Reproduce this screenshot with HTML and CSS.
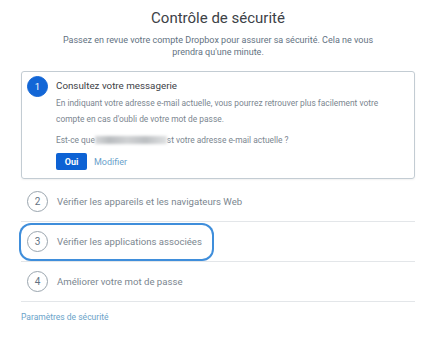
FILE: index.html
```html
<!DOCTYPE html>
<html lang="fr">
<head>
<meta charset="utf-8">
<title>Contrôle de sécurité</title>
<link rel="stylesheet" href="styles.css">
</head>
<body>
<main class="page">
  <header class="intro">
    <h1 class="title">Contrôle de sécurité</h1>
    <p class="subtitle">Passez en revue votre compte Dropbox pour assurer sa sécurité. Cela ne vous prendra qu'une minute.</p>
  </header>

  <section class="card">
    <span class="step step-active">1</span>
    <div class="card-body">
      <h2 class="card-title">Consultez votre messagerie</h2>
      <p class="card-text">En indiquant votre adresse e-mail actuelle, vous pourrez retrouver plus facilement votre compte en cas d'oubli de votre mot de passe.</p>
      <p class="card-question">Est-ce que<span class="blur"></span>st votre adresse e-mail actuelle ?</p>
      <div class="actions">
        <button class="btn-primary" type="button">Oui</button>
        <a class="link" href="#">Modifier</a>
      </div>
    </div>
  </section>

  <ul class="steps">
    <li class="row"><a class="row-link" href="#"><span class="step">2</span><span class="row-text">Vérifier les appareils et les navigateurs Web</span></a></li>
    <li class="row"><a class="row-link focused" href="#"><span class="step">3</span><span class="row-text">Vérifier les applications associées</span></a></li>
    <li class="row"><a class="row-link" href="#"><span class="step">4</span><span class="row-text">Améliorer votre mot de passe</span></a></li>
  </ul>

  <a class="footer-link" href="#">Paramètres de sécurité</a>
</main>
</body>
</html>
```

FILE: styles.css
```css
* { box-sizing: border-box; }
html, body { margin: 0; padding: 0; background: #ffffff; }
body { font-family: Roboto, "Liberation Sans", sans-serif; color: #637282; }

.page {
  width: 448px;
  padding: 0 33px 0 21px;
  display: flex;
  flex-direction: column;
}

.intro { text-align: center; padding-top: 8px; }
.title {
  margin: 0;
  font-size: 15px;
  line-height: 20px;
  font-weight: 400;
  color: #3d4247;
}
.subtitle {
  margin: 6px 30px 0;
  font-size: 9px;
  line-height: 12px;
  color: #637282;
}

.card {
  margin-top: 13px;
  border: 1px solid #c3ccd3;
  border-radius: 3px;
  box-shadow: 0 1px 2px rgba(0,0,0,0.06);
  padding: 4px 8px 8px 5px;
  display: flex;
  gap: 8px;
  align-items: flex-start;
}

.step {
  flex: none;
  width: 21px;
  height: 21px;
  border-radius: 50%;
  border: 1px solid #9aa5ae;
  display: flex;
  align-items: center;
  justify-content: center;
  font-size: 10px;
  color: #637282;
}
.step-active {
  background: #1266d6;
  border-color: #1266d6;
  color: #ffffff;
  font-size: 9.5px;
}

.card-body { flex: 1; }
.card-title {
  margin: 0;
  font-size: 9.8px;
  line-height: 19px;
  font-weight: 400;
  color: #3d4247;
}
.card-text {
  margin: 0;
  font-size: 8.4px;
  line-height: 16px;
  color: #7b8690;
}
.card-question {
  margin: 5px 0 0;
  font-size: 8.4px;
  line-height: 16px;
  color: #7b8690;
}
.blur {
  display: inline-block;
  width: 72px;
  height: 8px;
  vertical-align: -1px;
  background: linear-gradient(90deg, #d6d8da, #b9bcbf 20%, #cfd1d3 45%, #bcbfc2 70%, #dfe1e2);
  filter: blur(1.5px);
}

.actions {
  margin-top: 5px;
  display: flex;
  align-items: center;
  gap: 7px;
}
.btn-primary {
  font: inherit;
  font-size: 9px;
  font-weight: 700;
  color: #ffffff;
  background: #0d62d4;
  border: 0;
  border-radius: 2px;
  width: 31px;
  height: 17px;
  padding: 0;
}
.link {
  font-size: 9px;
  color: #6a9fcb;
  text-decoration: none;
}

.steps { list-style: none; margin: 3px 0 0; padding: 0; }
.row {
  height: 40px;
  border-bottom: 1px solid #e3e6e9;
  display: flex;
  align-items: center;
}
.row-link {
  display: inline-flex;
  align-items: center;
  gap: 9px;
  height: 34px;
  padding: 0 10px 0 6px;
  border-radius: 10px;
  text-decoration: none;
  color: #7b8690;
}
.row-link.focused { box-shadow: 0 0 0 2px #3f8edb; }
.row-text { font-size: 9.6px; }

.footer-link {
  margin-top: 10px;
  font-size: 8.5px;
  color: #6aa3c9;
  text-decoration: none;
  align-self: flex-start;
}
```
